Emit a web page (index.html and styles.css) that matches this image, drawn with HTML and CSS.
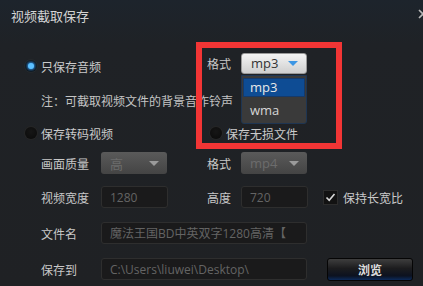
FILE: index.html
```html
<!DOCTYPE html>
<html lang="zh">
<head>
  <meta charset="UTF-8">
  <title>视频截取保存</title>
  <link rel="stylesheet" href="styles.css">
</head>
<body>
  <div class="dialog">
    <div class="title-bar">
      <span class="title">视频截取保存</span>
      <svg class="close" width="10" height="10" viewBox="0 0 10 10"><path d="M1 1L9 9M9 1L1 9" stroke="#b8b8b8" stroke-width="1.6"/></svg>
    </div>

    <div class="content">
      <div class="row row-1">
        <div class="col-left">
          <span class="radio checked"></span>
          <span class="text">只保存音频</span>
        </div>
        <div class="col-right">
          <span class="label label-short">格式</span>
          <div class="select-wrap">
            <div class="select active">
              <span>mp3</span>
              <span class="arrow blue"></span>
            </div>
            <ul class="dropdown">
              <li class="selected">mp3</li>
              <li>wma</li>
            </ul>
          </div>
        </div>
      </div>

      <div class="row row-2">
        <span class="text note">注：可截取视频文件的背景音作铃声</span>
      </div>

      <div class="row row-3">
        <div class="col-left">
          <span class="radio"></span>
          <span class="text">保存转码视频</span>
        </div>
        <div class="col-right radio-right">
          <span class="radio"></span>
          <span class="text">保存无损文件</span>
        </div>
      </div>

      <div class="row row-4">
        <div class="col-left">
          <span class="label">画面质量</span>
          <div class="select disabled"><span>高</span><span class="arrow"></span></div>
        </div>
        <div class="col-right">
          <span class="label label-short">格式</span>
          <div class="select disabled"><span>mp4</span><span class="arrow"></span></div>
        </div>
      </div>

      <div class="row row-5">
        <div class="col-left">
          <span class="label">视频宽度</span>
          <div class="input small">1280</div>
        </div>
        <div class="col-right">
          <span class="label label-short">高度</span>
          <div class="input small">720</div>
          <span class="checkbox">
            <svg width="13" height="13" viewBox="0 0 13 13"><path d="M2.5 6.5L5.2 9.3L10.5 3" fill="none" stroke="#d8d8d8" stroke-width="1.6"/></svg>
          </span>
          <span class="text">保持长宽比</span>
        </div>
      </div>

      <div class="row row-6">
        <span class="label">文件名</span>
        <div class="input wide">魔法王国BD中英双字1280高清【</div>
      </div>

      <div class="row row-7">
        <span class="label">保存到</span>
        <div class="input wide">C:\Users\liuwei\Desktop\</div>
        <button class="browse">浏览</button>
      </div>
    </div>

    <div class="highlight"></div>
  </div>
</body>
</html>
```

FILE: styles.css
```css
body {
  margin: 0;
  overflow: hidden;
  font-family: "Noto Sans CJK SC", "Noto Sans", sans-serif;
  font-size: 12px;
}

.dialog {
  position: relative;
  width: 423px;
  height: 286px;
  background: linear-gradient(180deg, #1d242c 0px, #1f2226 45px, #1f2124 100%);
  color: #c8c8c8;
  overflow: hidden;
}

.title-bar {
  height: 32px;
  display: flex;
  align-items: center;
  justify-content: space-between;
  padding-left: 11px;
}

.title {
  font-size: 13px;
  color: #d4d4d4;
  margin-top: -1px;
}

.close {
  margin-right: -5px;
  margin-top: -4px;
}

.content {
  padding-left: 25px;
  padding-top: 20px;
}

.row {
  display: flex;
  align-items: center;
  height: 22px;
}

.row-2 { margin-top: 15px; padding-left: 16px; }
.row-3 { margin-top: 11px; }
.row-4 { margin-top: 8px; }
.row-5 { margin-top: 12px; }
.row-6 { margin-top: 14px; padding-left: 16px; }
.row-7 { margin-top: 14px; padding-left: 16px; }

.col-left {
  display: flex;
  align-items: center;
  width: 182px;
}

.row-1 .col-left {
  padding-top: 6px;
}

.row-4 .col-left,
.row-5 .col-left {
  padding-left: 16px;
  width: 166px;
}

.col-right {
  display: flex;
  align-items: center;
}

.radio-right {
  margin-left: 3px;
}

.text {
  color: #cacaca;
  white-space: nowrap;
}

.note {
  color: #c4c4c4;
}

.radio {
  width: 12px;
  height: 12px;
  border-radius: 50%;
  background: radial-gradient(circle at 50% 40%, #161616, #0a0a0a);
  box-shadow: 0 0 0 1px #262626;
  margin-right: 4px;
  position: relative;
}

.radio.checked::after {
  content: "";
  position: absolute;
  left: 3px;
  top: 3px;
  width: 6px;
  height: 6px;
  border-radius: 50%;
  background: #5cc0ff;
  box-shadow: 0 0 3px 1px #2a8ae0;
}

.label {
  width: 60px;
  color: #c8c8c8;
  white-space: nowrap;
}

.label-short {
  width: 34px;
}

.select {
  width: 66px;
  height: 22px;
  box-sizing: border-box;
  border-radius: 3px;
  display: flex;
  align-items: center;
  justify-content: space-between;
  padding: 0 8px 0 9px;
}

.select.active {
  height: 21px;
  background: linear-gradient(180deg, #f4f4f4, #cfcfcf);
  border: 1px solid #9a9a9a;
  color: #333;
  font-family: "Open Sans", "Noto Sans", sans-serif;
  font-size: 13px;
}

.select.disabled {
  background: linear-gradient(180deg, #5a5a5a, #444);
  color: #6c6c6c;
  font-family: "Open Sans", "Noto Sans CJK SC", sans-serif;
  font-size: 13px;
}

.arrow {
  width: 0;
  height: 0;
  border-left: 5px solid transparent;
  border-right: 5px solid transparent;
  border-top: 5px solid #9a9a9a;
}

.arrow.blue {
  border-top-color: #3c96e4;
}

.select-wrap {
  position: relative;
}

.dropdown {
  position: absolute;
  top: 22px;
  left: 0;
  width: 66px;
  box-sizing: border-box;
  margin: 0;
  padding: 2px 1px;
  list-style: none;
  background: #3a3a3a;
  border: 1px solid #1e3552;
  border-radius: 0 0 3px 3px;
  font-family: "Open Sans", "Noto Sans", sans-serif;
  font-size: 13px;
  color: #d6d6d6;
  z-index: 2;
}

.dropdown li {
  height: 19px;
  line-height: 19px;
  padding-left: 7px;
  margin-bottom: 4px;
}

.dropdown li:last-child {
  margin-bottom: 1px;
}

.dropdown li.selected {
  background: #0e4c94;
  box-shadow: inset 0 0 0 1px #163a6a;
  color: #e8e8e8;
}

.input {
  height: 22px;
  box-sizing: border-box;
  border: 1px solid #2e2e2e;
  border-radius: 3px;
  background: #1a1a1b;
  color: #646464;
  padding-left: 8px;
  display: flex;
  align-items: center;
  font-family: "Open Sans", "Noto Sans CJK SC", sans-serif;
  font-size: 12px;
  white-space: nowrap;
  overflow: hidden;
}

.input.small {
  width: 67px;
}

.input.wide {
  width: 206px;
}

.checkbox {
  width: 13px;
  height: 13px;
  margin-left: 16px;
  margin-right: 6px;
  background: #121212;
  box-shadow: 0 0 0 1px #2c2c2c;
  display: flex;
}

.browse {
  margin-left: 20px;
  width: 86px;
  height: 23px;
  border: 1px solid #050505;
  border-radius: 3px;
  background: linear-gradient(180deg, #3e3e3e 0%, #1c1c1e 45%, #0c1220 80%, #0c2a5a 100%);
  color: #dcdcdc;
  font-family: "Noto Sans CJK SC", sans-serif;
  font-size: 12px;
  font-weight: bold;
  padding: 0;
}

.highlight {
  position: absolute;
  left: 196px;
  top: 42px;
  width: 146px;
  height: 107px;
  box-sizing: border-box;
  border: 6px solid #f23535;
  pointer-events: none;
  z-index: 3;
}
```
